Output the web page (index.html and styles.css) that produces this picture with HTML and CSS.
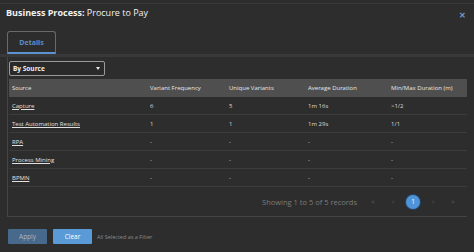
FILE: index.html
```html
<!DOCTYPE html>
<html>
<head>
<meta charset="utf-8">
<link rel="stylesheet" href="styles.css">
</head>
<body>
<div class="modal">
  <div class="title-row">
    <div class="title"><b>Business Process:</b> Procure to Pay</div>
    <div class="close">✕</div>
  </div>
  <div class="tabs">
    <div class="tab">Details</div>
  </div>
  <div class="panel">
    <div class="select-wrap">
      <div class="select"><span>By Source</span><span class="caret"></span></div>
    </div>
    <table class="grid">
      <thead>
        <tr><th class="c1">Source</th><th class="c2">Variant Frequency</th><th class="c3">Unique Variants</th><th class="c4">Average Duration</th><th class="c5">Min/Max Duration (m)</th></tr>
      </thead>
      <tbody>
        <tr><td><a>Capture</a></td><td>6</td><td>5</td><td>1m 16s</td><td>&gt;1/2</td></tr>
        <tr><td><a>Test Automation Results</a></td><td>1</td><td>1</td><td>1m 29s</td><td>1/1</td></tr>
        <tr><td><a>RPA</a></td><td>-</td><td>-</td><td>-</td><td>-</td></tr>
        <tr><td><a>Process Mining</a></td><td>-</td><td>-</td><td>-</td><td>-</td></tr>
        <tr><td><a>BPMN</a></td><td>-</td><td>-</td><td>-</td><td>-</td></tr>
      </tbody>
    </table>
    <div class="pager">
      <span class="info">Showing 1 to 5 of 5 records</span>
      <span class="pg">«</span>
      <span class="pg">‹</span>
      <span class="pg active">1</span>
      <span class="pg">›</span>
      <span class="pg">»</span>
    </div>
  </div>
  <div class="footer">
    <button class="btn apply">Apply</button>
    <button class="btn clear">Clear</button>
    <span class="note">All Selected as a Filter</span>
  </div>
</div>
</body>
</html>
```
FILE: styles.css
```css
html, body {
  margin: 0;
  padding: 0;
  background: #2d2d2d;
  font-family: "Open Sans", "Noto Sans", sans-serif;
  color: #e6e6e6;
}
.modal {
  width: 474px;
  height: 252px;
  box-sizing: border-box;
  padding-top: 3px;
  overflow: hidden;
}
.title-row {
  border-top: 1px solid #3a3a3a;
  height: 17px;
  display: flex;
  align-items: center;
  justify-content: space-between;
  padding: 0 8px 0 6px;
}
.title {
  font-size: 9px;
  color: #f2f2f2;
}
.title b { font-weight: 700; }
.close {
  color: #6f9ccc;
  font-size: 8px;
  font-weight: 700;
  margin-top: 3px;
}
.tabs {
  padding: 10px 0 0 7px;
  border-bottom: 3px solid #393939;
}
.tab {
  width: 47px;
  height: 20px;
  border: 1px solid #6a6a6a;
  border-bottom: 2px solid #5b92cf;
  border-radius: 3px 3px 0 0;
  color: #5d8dc2;
  font-size: 7px;
  font-weight: 700;
  display: flex;
  align-items: center;
  justify-content: center;
}
.panel {
  margin: 0 7px;
  border-left: 1px solid #444;
  border-bottom: 1px solid #444;
  height: 160px;
  box-sizing: border-box;
  display: flex;
  flex-direction: column;
}
.select-wrap {
  padding: 4px 0 0 1px;
  height: 22px;
  box-sizing: border-box;
}
.select {
  width: 96px;
  height: 15px;
  box-sizing: border-box;
  border: 1px solid #9a9a9a;
  border-radius: 2px;
  background: #2a2a2a;
  font-size: 6.5px;
  font-weight: 700;
  color: #f0f0f0;
  display: flex;
  align-items: center;
  justify-content: space-between;
  padding: 0 4px 0 3px;
}
.caret {
  width: 0;
  height: 0;
  border-left: 2.5px solid transparent;
  border-right: 2.5px solid transparent;
  border-top: 3px solid #e8e8e8;
}
.grid {
  border-collapse: collapse;
  table-layout: fixed;
  width: 458px;
  margin-left: 1px;
  font-size: 6px;
}
.grid th {
  background: #4f4f4f;
  color: #e8e8e8;
  font-weight: 400;
  text-align: left;
  height: 18px;
  padding: 0 0 0 3px;
}
.grid td {
  height: 17px;
  padding: 0 0 0 3px;
  border-bottom: 1px solid #3c3c3c;
  color: #dcdcdc;
}
.grid .c1 { width: 135px; }
.grid .c2 { width: 76px; }
.grid .c3 { width: 76px; }
.grid .c4 { width: 80px; }
.grid a {
  color: #e0e0e0;
  text-decoration: underline;
}
.pager {
  flex: 1;
  display: flex;
  align-items: center;
  justify-content: flex-end;
  padding-right: 4px;
  font-size: 7px;
  color: #8a8a8a;
}
.info { margin-right: 6px; font-size: 7.5px; color: #7c7c7c; }
.pg {
  width: 20px;
  text-align: center;
  color: #5a5a5a;
  font-size: 7px;
}
.pg.active {
  width: 14px;
  height: 14px;
  border-radius: 50%;
  background: #4f94d8;
  color: #fff;
  line-height: 14px;
  margin: 0 3px;
  font-size: 6.5px;
  box-shadow: 0 0 0 1px #274563;
}
.footer {
  display: flex;
  align-items: center;
  padding: 12px 0 0 8px;
}
.btn {
  width: 39px;
  height: 15px;
  border: none;
  border-radius: 1px;
  font-family: inherit;
  font-size: 6.5px;
  padding: 0;
  margin-right: 6px;
}
.apply { background: #47698c; color: #a9b8c8; }
.clear { background: #5a9ad6; color: #ffffff; }
.note { font-size: 5.5px; color: #8c8c8c; margin-left: -1px; }
```
